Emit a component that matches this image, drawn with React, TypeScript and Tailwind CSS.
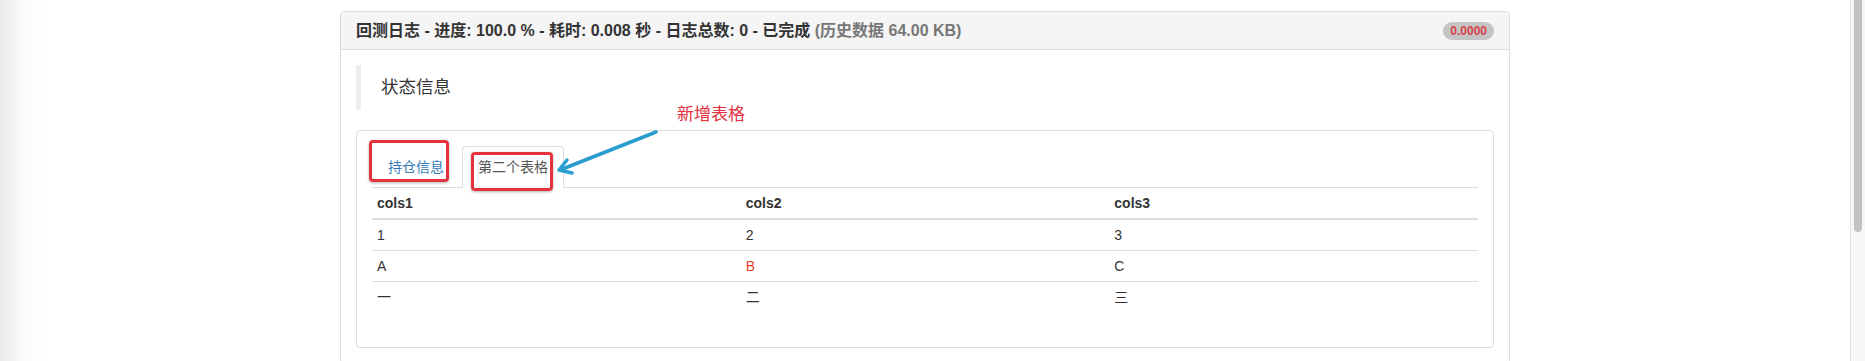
import React from 'react';

const rows = [
  ['1', '2', '3'],
  ['A', 'B', 'C'],
  ['一', '二', '三'],
];

function Arrow() {
  // annotation arrow pointing at the new tab
  return (
    <svg
      className="absolute left-[210px] top-[75px]"
      width="115"
      height="55"
      viewBox="0 0 115 55"
      fill="none"
    >
      <path
        d="M105 7 L9 45"
        stroke="#2a9dcf"
        strokeWidth="3.5"
        strokeLinecap="round"
      />
      <path
        d="M21 48 L8 45 L16 35"
        stroke="#2a9dcf"
        strokeWidth="3.5"
        strokeLinecap="round"
        strokeLinejoin="round"
      />
    </svg>
  );
}

export default function App() {
  const [tab, setTab] = React.useState(1);

  return (
    <div className="flex h-[361px] w-full overflow-hidden bg-white font-['Liberation_Sans','Noto_Sans_CJK_SC',sans-serif] text-[14px] text-[#333]">
      <div className="flex-1 bg-[linear-gradient(to_right,#ebebeb_0px,#fbfbfb_25px,#ffffff_45px)] pt-[11px]">
        <div className="mx-auto w-[1170px]">
          {/* Panel */}
          <div className="rounded-[4px] border border-[#dddddd] bg-white">
            <div className="flex items-center justify-between rounded-t-[4px] border-b border-[#dddddd] bg-[#f5f5f5] px-[15px] pt-[9px] pb-[8px] leading-5">
              <div className="text-[16px] font-bold text-[#333]">
                回测日志 - 进度: 100.0 % - 耗时: 0.008 秒 - 日志总数: 0 - 已完成{' '}
                <span className="text-[#777]">(历史数据 64.00 KB)</span>
              </div>
              <span className="rounded-[10px] bg-[#c4c4c4] px-[7px] py-[3px] text-[12px] leading-3 font-bold text-[#d9424a]">
                0.0000
              </span>
            </div>

            <div className="relative p-[15px]">
              <blockquote className="mb-5 border-l-[5px] border-[#eeeeee] px-5 py-2.5 text-[17.5px] leading-[25px]">
                状态信息
              </blockquote>

              <div className="rounded-[4px] border border-[#dddddd] p-[15px]">
                <ul className="flex border-b border-[#dddddd]">
                  <li className="-mb-px mr-[2px]">
                    <button
                      onClick={() => setTab(0)}
                      className={
                        tab === 0
                          ? 'block rounded-t-[4px] border border-[#dddddd] border-b-transparent bg-white px-[15px] py-2.5 leading-5 text-[#555]'
                          : 'block rounded-t-[4px] border border-transparent px-[15px] py-2.5 leading-5 text-[#337ab7]'
                      }
                    >
                      持仓信息
                    </button>
                  </li>
                  <li className="-mb-px mr-[2px]">
                    <button
                      onClick={() => setTab(1)}
                      className={
                        tab === 1
                          ? 'block rounded-t-[4px] border border-[#dddddd] border-b-transparent bg-white px-[15px] py-2.5 leading-5 text-[#555]'
                          : 'block rounded-t-[4px] border border-transparent px-[15px] py-2.5 leading-5 text-[#337ab7]'
                      }
                    >
                      第二个表格
                    </button>
                  </li>
                </ul>

                <table className="mb-5 w-full table-fixed border-collapse">
                  <thead>
                    <tr>
                      <th className="border-b-2 border-[#dddddd] p-[5px] text-left leading-5 font-bold">cols1</th>
                      <th className="border-b-2 border-[#dddddd] p-[5px] text-left leading-5 font-bold">cols2</th>
                      <th className="border-b-2 border-[#dddddd] p-[5px] text-left leading-5 font-bold">cols3</th>
                    </tr>
                  </thead>
                  <tbody>
                    {rows.map((r, i) => (
                      <tr key={i}>
                        {r.map((c, j) => (
                          <td
                            key={j}
                            className={
                              c === 'B'
                                ? 'border-t border-[#dddddd] p-[5px] leading-5 text-[#e8432e]'
                                : 'border-t border-[#dddddd] p-[5px] leading-5'
                            }
                          >
                            {c}
                          </td>
                        ))}
                      </tr>
                    ))}
                  </tbody>
                </table>
              </div>

              {/* Annotations */}
              <div className="absolute left-[336px] top-[53px] text-[17px] leading-6 text-[#e2303e]">新增表格</div>
              <Arrow />
              <div className="absolute left-[28px] top-[90px] h-[42px] w-[80px] rounded-[4px] border-[3px] border-[#e5323f] shadow-[0_1px_3px_rgba(0,0,0,0.3)]" />
              <div className="absolute left-[130px] top-[102px] h-[39px] w-[82px] rounded-[4px] border-[3px] border-[#e5323f] shadow-[0_1px_3px_rgba(0,0,0,0.3)]" />
            </div>
          </div>
        </div>
      </div>

      {/* Scrollbar */}
      <div className="flex w-[15px] justify-center border-l border-[#e3e3e3] bg-[#f7f7f7]">
        <div className="h-[232px] w-[8px] rounded-b-full bg-[#c2c2c2]" />
      </div>
    </div>
  );
}
